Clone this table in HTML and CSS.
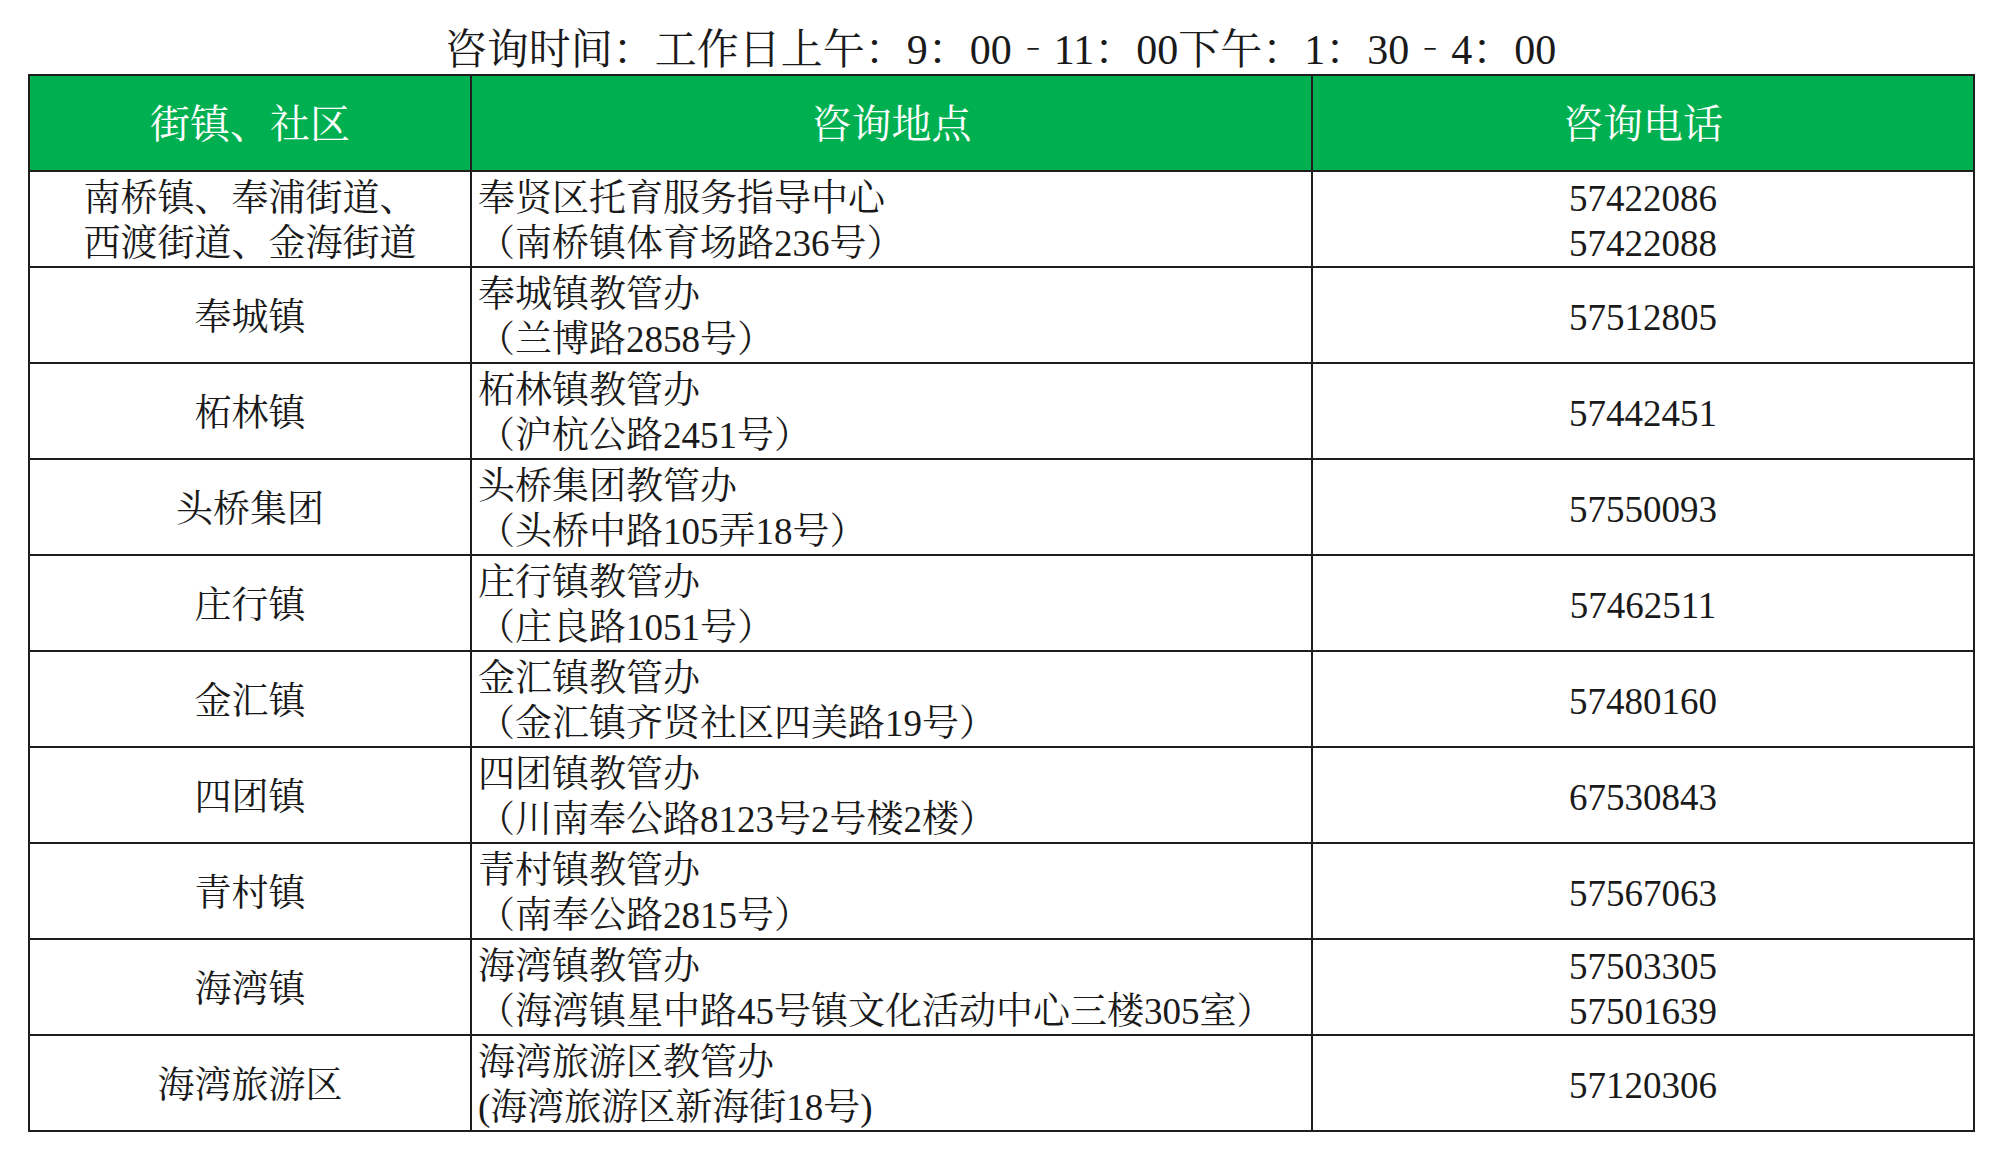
FILE: index.html
```html
<!DOCTYPE html>
<html lang="zh-CN">
<head>
<meta charset="utf-8">
<title>咨询时间</title>
<link rel="stylesheet" href="styles.css">
</head>
<body>
<div class="page">
  <h1 class="title">咨询时间：工作日上午：9：00<span class="dash">－</span>11：00下午：1：30<span class="dash">－</span>4：00</h1>
  <table class="info">
    <colgroup>
      <col class="c1">
      <col class="c2">
      <col class="c3">
    </colgroup>
    <thead>
      <tr><th>街镇、社区</th><th>咨询地点</th><th>咨询电话</th></tr>
    </thead>
    <tbody>
      <tr><td class="area">南桥镇、奉浦街道、<br>西渡街道、金海街道</td><td class="addr">奉贤区托育服务指导中心<br>（南桥镇体育场路236号）</td><td class="tel">57422086<br>57422088</td></tr>
      <tr><td class="area">奉城镇</td><td class="addr">奉城镇教管办<br>（兰博路2858号）</td><td class="tel">57512805</td></tr>
      <tr><td class="area">柘林镇</td><td class="addr">柘林镇教管办<br>（沪杭公路2451号）</td><td class="tel">57442451</td></tr>
      <tr><td class="area">头桥集团</td><td class="addr">头桥集团教管办<br>（头桥中路105弄18号）</td><td class="tel">57550093</td></tr>
      <tr><td class="area">庄行镇</td><td class="addr">庄行镇教管办<br>（庄良路1051号）</td><td class="tel">57462511</td></tr>
      <tr><td class="area">金汇镇</td><td class="addr">金汇镇教管办<br>（金汇镇齐贤社区四美路19号）</td><td class="tel">57480160</td></tr>
      <tr><td class="area">四团镇</td><td class="addr">四团镇教管办<br>（川南奉公路8123号2号楼2楼）</td><td class="tel">67530843</td></tr>
      <tr><td class="area">青村镇</td><td class="addr">青村镇教管办<br>（南奉公路2815号）</td><td class="tel">57567063</td></tr>
      <tr><td class="area">海湾镇</td><td class="addr">海湾镇教管办<br>（海湾镇星中路45号镇文化活动中心三楼305室）</td><td class="tel">57503305<br>57501639</td></tr>
      <tr><td class="area">海湾旅游区</td><td class="addr">海湾旅游区教管办<br>(海湾旅游区新海街18号)</td><td class="tel">57120306</td></tr>
    </tbody>
  </table>
</div>
</body>
</html>
```

FILE: styles.css
```css
html, body {
  margin: 0;
  padding: 0;
  background: #ffffff;
}

body {
  font-family: "Liberation Serif", "Noto Serif CJK SC", "Noto Sans CJK SC", serif;
  color: #1a1a1a;
}

.page {
  width: 1945px;
  padding: 26px 0 0 28px;
}

.title {
  margin: 0;
  font-size: 42px;
  line-height: 48px;
  font-weight: normal;
  text-align: center;
  color: #1a1a1a;
}

.dash {
  display: inline-block;
  width: 1em;
  text-align: center;
  transform: scaleX(0.35);
}

.info {
  width: 1945px;
  border-collapse: collapse;
  table-layout: fixed;
}

.c1 { width: 442px; }
.c2 { width: 841px; }
.c3 { width: 662px; }

.info th,
.info td {
  border: 2px solid #1e1e1e;
  vertical-align: middle;
  padding: 4px 0 0 0;
}

.info th {
  height: 90px;
  background: #00b050;
  color: #ffffff;
  font-size: 40px;
  line-height: 48px;
  font-weight: normal;
  text-align: center;
}

.info td {
  height: 90px;
  font-size: 37px;
  line-height: 45px;
}

.area {
  text-align: center;
}

.info td.addr {
  text-align: left;
  padding-left: 6px;
}

.tel {
  text-align: center;
}
```
